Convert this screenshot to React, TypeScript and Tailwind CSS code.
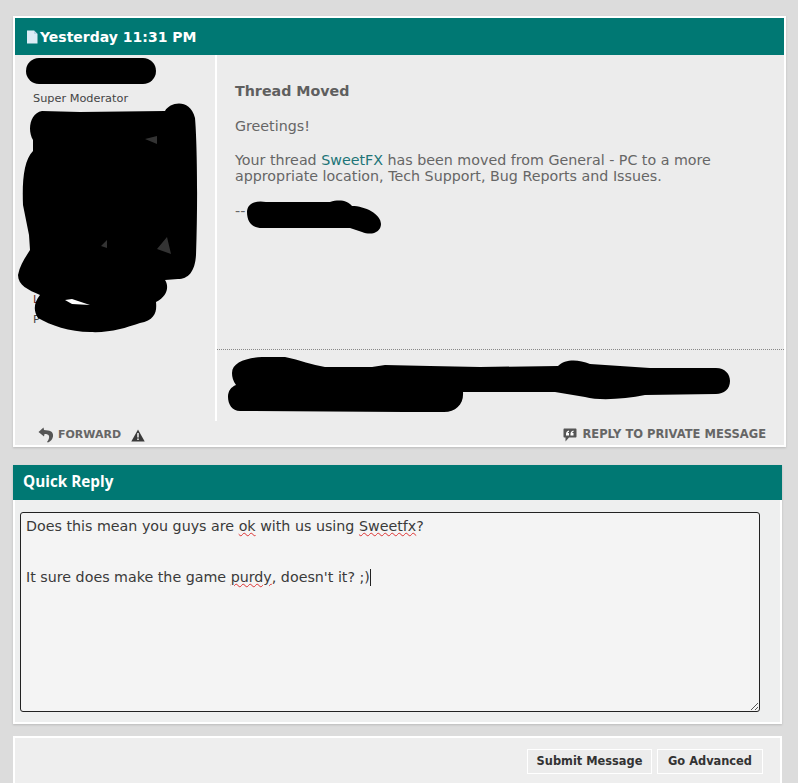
import React from "react";

function Scribbles() {
  return (
    <svg className="absolute left-0 top-0 pointer-events-none" width="798" height="783" viewBox="0 0 798 783">
      <path d="M39 71 H143" stroke="#000" strokeWidth="26" strokeLinecap="round" fill="none" />
      <path
        d="M42 111 L80 112 L165 111 C170 102 190 98 195 118 C197 140 198 200 196 255 C195 272 188 279 178 279 L165 280 C169 286 168 296 156 302 C157 312 155 320 140 323 C125 328 110 333 90 332 C70 332 50 325 38 318 C33 310 34 303 40 295 C28 290 18 285 18 275 C20 265 25 258 30 250 L29 235 L23 205 C22 180 24 160 33 151 L33 140 C27 130 30 113 42 111 Z"
        fill="#000"
      />
      <path d="M65 300 L72 299 L90 305 L72 304 Z" fill="#fff" />
      <path d="M145 139 L157 136 L157 144 Z M101 246 L107 240 L107 248 Z M157 249 L167 237 L171 254 Z" fill="#333" />
      <path
        d="M247 212 C247 204 255 200 266 202 L330 202 C340 199 348 201 352 206 C365 206 381 214 381 224 C381 232 372 236 362 232 L350 228 L262 228 C252 228 247 222 247 212 Z"
        fill="#000"
      />
      <path
        d="M232 373 C232 363 245 358 262 357 L285 357 C300 360 312 365 325 367 L372 367 L385 365 L430 366 L480 367 L558 366 C565 359 578 359 590 364 L650 368 L716 368 C725 368 730 374 730 381 C730 389 724 394 716 394 L645 395 C625 399 600 401 585 397 L555 392 L484 392 L463 392 C464 404 456 412 444 412 L405 412 L240 411 C232 411 228 404 228 397 C228 391 231 387 236 385 C233 381 232 377 232 373 Z"
        fill="#000"
      />
    </svg>
  );
}

export default function App() {
  return (
    <div className="relative w-[798px] h-[783px] overflow-hidden bg-[#dcdcdc] font-['DejaVu_Sans',sans-serif]">
      <div className="flex flex-col pt-4 pl-[13px]">
        {/* Message panel */}
        <section className="w-[773px] h-[431px] border-2 border-white flex flex-col shadow-[0_1px_2px_#bbb] bg-[#ececec]">
          <header className="h-[37px] shrink-0 bg-[#007873] flex items-center pl-[11px] gap-[2px] text-white">
            <svg width="12" height="14" viewBox="0 0 12 14">
              <path d="M1 0.5 H8 L11.5 4 V13.5 H1 Z" fill="#dcecf6" />
              <path d="M8 0.5 V4 H11.5" fill="#b8d4e6" />
            </svg>
            <span className="text-[14px] font-bold leading-none">Yesterday 11:31 PM</span>
          </header>
          <div className="h-[366px] shrink-0 flex">
            <aside className="w-[202px] shrink-0 border-r-2 border-white pl-[18px] pt-[37px] text-[11.3px] leading-[14px] text-[#444]">
              <div>Super Moderator</div>
              <div className="mt-[187px] text-[#6b2a2a]">L</div>
              <div className="mt-[6px]">P</div>
            </aside>
            <div className="flex-1 flex flex-col">
              <div className="h-[294px] pl-[18px] pt-[28px] text-[14.25px] leading-[16px] text-[#666]">
                <h2 className="font-bold text-[14.25px] leading-[17px] text-[#5f5f5f]">Thread Moved</h2>
                <p className="mt-[18px]">Greetings!</p>
                <p className="mt-[18px]">
                  Your thread <span className="text-[#207477]">SweetFX</span> has been moved from General - PC to a more
                  <br />
                  appropriate location, Tech Support, Bug Reports and Issues.
                </p>
                <p className="mt-[19px]">--</p>
              </div>
              <div className="border-t border-dotted border-[#888]" />
            </div>
          </div>
          <footer className="flex-1 flex items-center justify-between pl-[23px] pr-[18px] pt-[4px] text-[11px] font-bold text-[#666]">
            <div className="flex items-center">
              <svg width="16" height="16" viewBox="0 0 16 16" className="mr-[4px]">
                <path d="M0.5 5 L5.5 0.5 L6 3 L10 3.5 C14 4 15.5 6.5 15 9.5 C14.5 12.5 12.5 14.5 10 15.5 L9 15 C10.5 13 11.5 11 11 9 C10.5 7.5 9 7 6.5 7 L6 9.5 Z" fill="#555" />
              </svg>
              <span>FORWARD</span>
              <svg width="14" height="13" viewBox="0 0 14 13" className="ml-[10px]">
                <path d="M7 0.5 L13.7 12.5 H0.3 Z" fill="#3a3a3a" />
                <path d="M6.3 4 H7.7 V8.5 H6.3 Z M6.3 9.5 H7.7 V11 H6.3 Z" fill="#fff" />
              </svg>
            </div>
            <div className="flex items-center text-[11.5px]">
              <svg width="14" height="14" viewBox="0 0 14 14" className="mr-[5px]">
                <path d="M1.5 0.5 H12.5 C13.2 0.5 13.5 1 13.5 1.5 V8.5 C13.5 9.2 13 9.5 12.5 9.5 H6 L2.5 13.5 V9.5 H1.5 C0.8 9.5 0.5 9 0.5 8.5 V1.5 C0.5 1 0.8 0.5 1.5 0.5 Z" fill="#555" />
                <path d="M6 2.5 C4 3 3 4 3 6 V7.5 H6 V5 H4.8 C4.8 4.4 5.3 4 6 4 Z M10.5 2.5 C8.5 3 7.5 4 7.5 6 V7.5 H10.5 V5 H9.3 C9.3 4.4 9.8 4 10.5 4 Z" fill="#fff" />
              </svg>
              <span>REPLY TO PRIVATE MESSAGE</span>
            </div>
          </footer>
        </section>

        {/* Quick reply */}
        <section className="mt-[18px] w-[769px] h-[259px] border-x-2 border-b-2 border-white flex flex-col bg-[#eeefef] shadow-[0_1px_2px_#bbb]">
          <header className="-mx-[2px] h-[35px] shrink-0 bg-[#007873] flex items-center pl-[10px] pb-[2px] text-white font-['Open_Sans',sans-serif] text-[15.3px] font-bold">
            Quick Reply
          </header>
          <div className="pl-[5px] pt-[12px]">
            <div className="relative w-[740px] h-[200px] border border-[#222] rounded-[3px] bg-[#f4f4f4] pl-[5px] pt-[5px] text-[14.25px] leading-[17px] text-[#3a3a3a]">
              <p>
                Does this mean you guys are{" "}
                <span className="underline decoration-wavy decoration-[#d33] decoration-1">ok</span> with us using{" "}
                <span className="underline decoration-wavy decoration-[#d33] decoration-1">Sweetfx</span>?
              </p>
              <p className="mt-[34px] flex">
                <span>
                  It sure does make the game{" "}
                  <span className="underline decoration-wavy decoration-[#d33] decoration-1">purdy</span>, doesn't it? ;)
                </span>
                <span className="inline-block w-px h-[17px] bg-[#222]" />
              </p>
              <svg className="absolute right-0 bottom-0" width="10" height="10" viewBox="0 0 10 10">
                <path d="M2 9 L9 2 M6 9 L9 6" stroke="#555" strokeWidth="1" />
              </svg>
            </div>
          </div>
        </section>

        {/* Buttons */}
        <section className="mt-[12px] w-[769px] h-[60px] border-2 border-white bg-[#eeeeee] flex items-start justify-end gap-[5px] pt-[10px] pr-[17px]">
          <button className="w-[125px] h-[25px] mt-[1px] border border-white bg-[#ececec] text-[11.4px] font-bold text-[#333]">Submit Message</button>
          <button className="w-[106px] h-[25px] mt-[1px] border border-white bg-[#ececec] text-[11.4px] font-bold text-[#333]">Go Advanced</button>
        </section>
      </div>
      <Scribbles />
    </div>
  );
}
